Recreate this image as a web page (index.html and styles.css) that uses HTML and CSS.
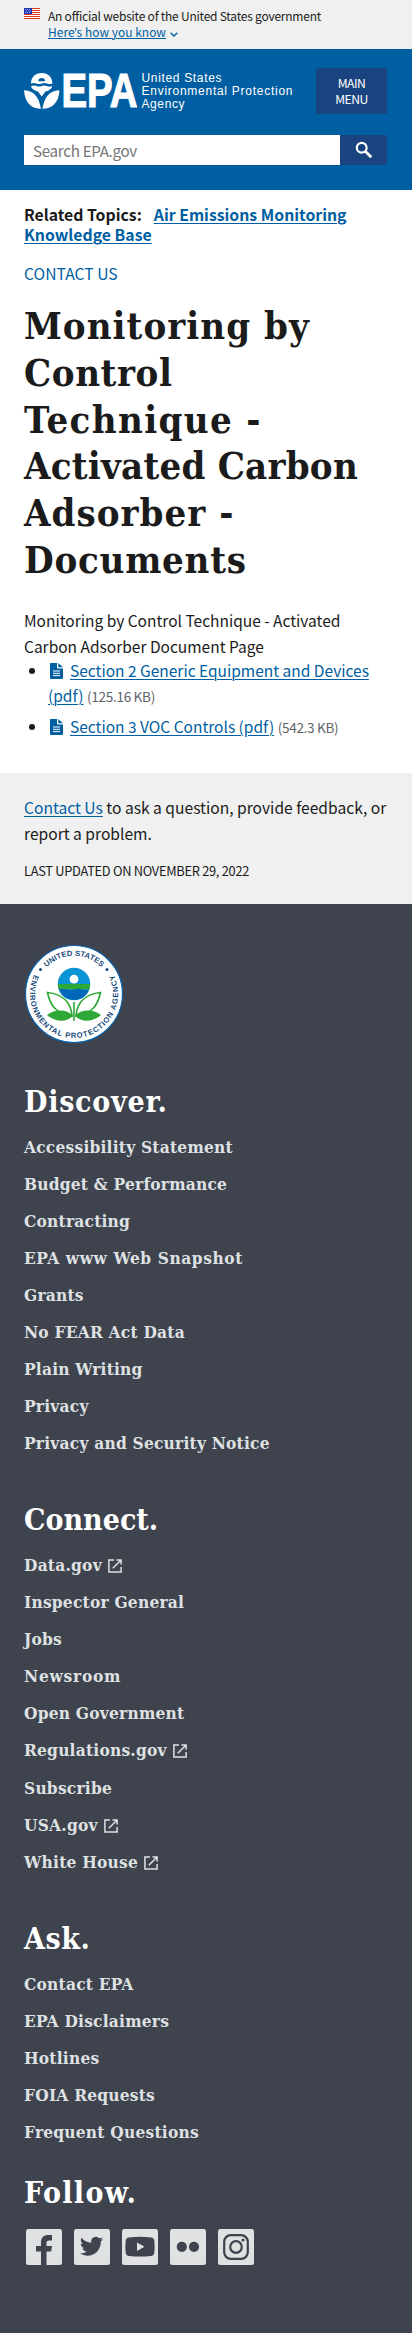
FILE: index.html
```html
<!DOCTYPE html>
<html lang="en">
<head>
<meta charset="utf-8">
<meta name="viewport" content="width=device-width, initial-scale=1">
<title>Monitoring by Control Technique - Activated Carbon Adsorber - Documents</title>
<link rel="stylesheet" href="styles.css">
</head>
<body>
<svg class="defs" width="0" height="0" aria-hidden="true">
  <symbol id="ext" viewBox="0 0 14 14"><path d="M6 .9H.9v12.200h12.200V8M8.500.9h4.600v4.600M12.800 1.200 4.800 9.200" fill="none" stroke="currentColor" stroke-width="1.500"/></symbol>
  <symbol id="doc" viewBox="0 0 13 16"><path d="M0 1Q0 0 1 0h6v4.500q0 1 1 1h5V15q0 1-1 1H1q-1 0-1-1z" fill="#005ea2"/><path d="M8.300 0 13 4.300H8.300z" fill="#005ea2"/><path d="M3 8h7M3 10.300h7M3 12.600h7" stroke="#fff" stroke-width="1"/></symbol>
</svg>

<div class="banner">
  <svg class="flag" viewBox="0 0 16 11"><path fill="#fff" d="M0 0h16v11H0z"/><path d="M0 .5h16M0 2.500h16M0 4.500h16M0 6.500h16M0 8.500h16M0 10.500h16" stroke="#db3e1f"/><path fill="#1e33b1" d="M0 0h8v6H0z"/><path d="M1 1.500h6M2 3h5M1 4.500h6" stroke="#fff" stroke-width=".7" stroke-dasharray=".8 1.200"/></svg>
  <div>
    <p class="banner-text tight">An official website of the United States government</p>
    <p class="banner-text"><a class="banner-link" href="#">Here<span class="apos">’</span>s how you know</a><svg class="chev" viewBox="0 0 8 5"><path d="m.7.8 3.300 3.200L7.300.8" fill="none" stroke="#005ea2" stroke-width="1.400"/></svg></p>
  </div>
</div>

<header class="header">
  <div class="brand-row">
    <svg class="logo" viewBox="0 0 270 40" role="img" aria-label="EPA">
      <g fill="#fff">
        <path d="M7 11.500C7 5 11.200.9 17.700.9S28.400 5 28.400 11.500q-2.500 1-5.200 0t-5.500 0-5.200 0-5.500 0z"/>
        <path d="M7 14.200q3-1.300 5.700-.2t5 0 5 0 5.700.2C27.500 17 24 19 21.500 19.500L17.700 24.500 14 19.500c-3-.7-6.300-2.700-7-5.300z"/>
        <path d="M0 18.200c8 .6 14.500 4 17 18.600C8 36.500 1 32 0 18.200zM35.500 18.200c-8 .6-14.500 4-17 18.600C27.500 36.500 34.500 32 35.500 18.200z"/>
      </g>
      <path d="M14.300 9.300a3.400 3.400 0 1 1 6.800 0z" fill="#005ea2"/>
      <text class="logo-epa" x="37.500" y="35.400" textLength="76" lengthAdjust="spacingAndGlyphs">EPA</text>
      <text class="logo-tag" x="117.500" y="10.300" textLength="80">United States</text>
      <text class="logo-tag" x="117.500" y="23" textLength="151">Environmental Protection</text>
      <text class="logo-tag" x="117.500" y="35.800" textLength="43">Agency</text>
    </svg>
    <button class="menu-btn">MAIN<br>MENU</button>
  </div>
  <form class="search">
    <div class="search-field">Search EPA.gov</div>
    <div class="search-btn"><svg viewBox="0 0 18 18"><circle cx="6.700" cy="6.700" r="4.900" fill="none" stroke="#fff" stroke-width="2.200"/><path d="m10.300 10.300 6 6" stroke="#fff" stroke-width="2.700"/></svg></div>
  </form>
</header>

<main class="main">
  <p class="related"><span class="related-label">Related Topics:</span><a href="#">Air Emissions Monitoring<br>Knowledge Base</a></p>
  <a class="contact" href="#">CONTACT US</a>
  <h1><span class="track-wide">Monitoring by</span><br><span class="track-mid">Control</span><br><span class="track-wider">Technique -</span><br><span class="track-slim">Activated Carbon</span><br><span class="track-wide">Adsorber -</span><br><span class="track-loose">Documents</span></h1>
  <p class="intro">Monitoring by Control Technique - Activated<br>Carbon Adsorber Document Page</p>
  <ul class="docs">
    <li><svg class="doc"><use href="#doc"/></svg><a href="#">Section 2 Generic Equipment and Devices<br>(pdf)</a> <span class="size">(125.16 KB)</span></li>
    <li><svg class="doc"><use href="#doc"/></svg><a href="#">Section 3 VOC Controls (pdf)</a> <span class="size">(542.3 KB)</span></li>
  </ul>
</main>

<section class="feedback">
  <p class="ask-line"><a href="#">Contact Us</a> to ask a question, provide feedback, or<br>report a problem.</p>
  <p class="updated">LAST UPDATED ON NOVEMBER 29, 2022</p>
</section>

<footer class="footer">
  <svg class="seal" viewBox="-50 -50 100 100" role="img" aria-label="EPA seal">
    <defs>
      <path id="arc-top" d="M-38.300 0A38.300 38.300 0 0 1 38.300 0"/>
      <path id="arc-bottom" d="M-39.600 -19.500A44.100 44.100 0 1 0 39.600 -19.500"/>
    </defs>
    <circle r="48.500" fill="#fff" stroke="#0b64b0" stroke-width="1.200"/>
    <text class="seal-text"><textPath href="#arc-top" startOffset="50%" text-anchor="middle" textLength="61" lengthAdjust="spacingAndGlyphs">UNITED STATES</textPath></text>
    <text class="seal-text"><textPath href="#arc-bottom" startOffset="50%" text-anchor="middle" textLength="178">ENVIRONMENTAL PROTECTION AGENCY</textPath></text>
    <circle cx="-33.500" cy="-24.500" r="1.500" fill="#174a7c"/><circle cx="33" cy="-24.500" r="1.500" fill="#174a7c"/>
    <circle cy="-10" r="16.200" fill="#0a94d6"/>
    <path d="M-16.200-10h32.400A16.200 16.200 0 0 1 15-4q-4-2-7.500 0T0-4t-7.500 0T-15-4a16.200 16.200 0 0 1-1.200-6z" fill="#2ea836"/>
    <path d="M-15.200-4.500Q-11-6-7.500-4.500T0-4.500t7.500 0 7.700 0A16.200 16.200 0 0 1-15.200-4.500z" fill="#0067b9"/>
    <circle cy="-14.800" r="4.400" fill="#fff"/>
    <path d="M0 8v19" stroke="#2ea836" stroke-width="1.600"/>
    <g fill="#fff" stroke="#2ea836" stroke-width="1.700"><path d="M-2 22C-3 9-11 0-26.500-1.500-24 10-19 20-2 22z"/><path d="M2 22C3 9 11 0 26.500-1.500 24 10 19 20 2 22z"/></g>
    <path d="M-1 22C-7 15-19 15-27 21c8 7 19 8 26 1zM1 22c6-7 18-7 26-1-8 7-19 8-26 1z" fill="#2ea836"/>
  </svg>

  <nav class="group discover">
    <h2 class="track-loose">Discover.</h2>
    <ul>
      <li><a href="#">Accessibility Statement</a></li>
      <li><a href="#">Budget &amp; Performance</a></li>
      <li><a href="#">Contracting</a></li>
      <li><a class="track-mid" href="#">EPA www Web Snapshot</a></li>
      <li><a href="#">Grants</a></li>
      <li><a href="#">No FEAR Act Data</a></li>
      <li><a href="#">Plain Writing</a></li>
      <li><a href="#">Privacy</a></li>
      <li><a href="#">Privacy and Security Notice</a></li>
    </ul>
  </nav>
  <nav class="group connect">
    <h2>Connect.</h2>
    <ul>
      <li class="external"><a href="#">Data.gov</a><svg class="ext"><use href="#ext"/></svg></li>
      <li><a href="#">Inspector General</a></li>
      <li><a href="#">Jobs</a></li>
      <li><a class="track-loose" href="#">Newsroom</a></li>
      <li><a href="#">Open Government</a></li>
      <li class="external"><a href="#">Regulations.gov</a><svg class="ext"><use href="#ext"/></svg></li>
      <li><a href="#">Subscribe</a></li>
      <li class="external"><a href="#">USA.gov</a><svg class="ext"><use href="#ext"/></svg></li>
      <li class="external"><a href="#">White House</a><svg class="ext"><use href="#ext"/></svg></li>
    </ul>
  </nav>
  <nav class="group ask">
    <h2 class="track-mid">Ask.</h2>
    <ul>
      <li><a href="#">Contact EPA</a></li>
      <li><a href="#">EPA Disclaimers</a></li>
      <li><a href="#">Hotlines</a></li>
      <li><a href="#">FOIA Requests</a></li>
      <li><a href="#">Frequent Questions</a></li>
    </ul>
  </nav>
  <section class="group follow">
    <h2 class="track-wider">Follow.</h2>
    <div class="social">
      <svg viewBox="0 0 36 36"><rect width="36" height="36" rx="2.500"/><path class="cut" d="M15 36V22.500H10V17h5v-3.500C15 8.500 17.500 6 22.300 6H26v5.500h-3c-2 0-2.500 1-2.500 2.500v3H26l-.8 5.500h-4.700V36z"/></svg>
      <svg viewBox="0 0 36 36"><rect width="36" height="36" rx="2.500"/><path class="cut" transform="translate(5.900 5.600) scale(.97)" d="M23.953 4.570a10 10 0 01-2.825.775 4.958 4.958 0 002.163-2.723c-.951.555-2.005.959-3.127 1.184a4.920 4.920 0 00-8.384 4.482C7.690 8.095 4.067 6.130 1.640 3.162a4.822 4.822 0 00-.666 2.475c0 1.710.87 3.213 2.188 4.096a4.904 4.904 0 01-2.228-.616v.06a4.923 4.923 0 003.946 4.827 4.996 4.996 0 01-2.212.085 4.936 4.936 0 004.604 3.417 9.867 9.867 0 01-6.102 2.105c-.39 0-.779-.023-1.170-.067a13.995 13.995 0 007.557 2.209c9.053 0 13.998-7.496 13.998-13.985 0-.21 0-.42-.015-.63A9.935 9.935 0 0024 4.590z"/></svg>
      <svg viewBox="0 0 36 36"><rect width="36" height="36" rx="2.500"/><path class="cut" d="M7 8.400q11-1.200 22 0 3 .3 3.300 3.300.7 6 0 12-.3 3-3.300 3.400-11 1-22 0-3-.4-3.300-3.400-.7-6 0-12Q4 8.700 7 8.400z"/><path d="m15 13.500 7.500 4.300-7.500 4.300z"/></svg>
      <svg viewBox="0 0 36 36"><rect width="36" height="36" rx="2.500"/><circle class="cut" cx="11.800" cy="17.800" r="5.100"/><circle class="cut" cx="24" cy="17.800" r="5.100"/></svg>
      <svg viewBox="0 0 36 36"><rect width="36" height="36" rx="2.500"/><rect class="line" x="6.200" y="6.200" width="23.600" height="23.600" rx="6.500"/><circle class="line" cx="18" cy="18" r="5.800"/><circle class="cut" cx="25" cy="11" r="1.600"/></svg>
    </div>
  </section>
</footer>
</body>
</html>
```
FILE: styles.css
```css
* { box-sizing: border-box; }
body {
  margin: 0;
  color: #1b1b1b;
  background: #fff;
  font-family: "Noto Sans CJK SC", "Noto Sans", sans-serif;
  font-size: 15.500px;
}
p, h1, h2, ul { margin: 0; padding: 0; }
a { color: #005ea2; text-underline-offset: 2px; text-decoration-thickness: 1px; }
.defs { position: absolute; }

.banner { display: flex; height: 49px; padding: 8px 24px 0; background: #f0f0f0; }
.flag { width: 16px; height: 11px; margin-right: 8px; }
.banner-text { height: 16px; font-size: 12px; line-height: 15px; white-space: nowrap; }
.tight { letter-spacing: -.23px; }
.banner-link { text-underline-offset: 1px; }
.apos { font-family: "Open Sans", sans-serif; }
.chev { width: 8px; height: 5px; margin-left: 4px; }

.header { height: 141px; padding: 19px 25px 0 24px; background: #005ea2; }
.brand-row { display: flex; justify-content: space-between; height: 67px; }
.logo { width: 270px; height: 40px; margin: 4px 0 0; flex: none; overflow: visible; }
.logo-epa { font: bold 47.500px "Liberation Sans", Arial, sans-serif; fill: #fff; stroke: #fff; stroke-width: 1.200; }
.logo-tag { font: 12px "Liberation Sans", Arial, sans-serif; fill: #fff; }
.menu-btn {
  flex: none; width: 71px; height: 46px; margin: 0 0 0 -10px; padding: 0; border: 0; border-radius: 2px;
  background: #1a4480; color: #fff; font: inherit; font-size: 12.200px; line-height: 16px; letter-spacing: -.5px;
}
.search { display: flex; height: 30px; }
.search-field {
  flex: 1; padding-left: 8px; border: 1px solid #fff;
  background: #fff; color: #757575; font-size: 15.200px; line-height: 29px; letter-spacing: -.32px;
}
.search-btn { display: flex; justify-content: center; width: 47px; padding-top: 6px; background: #1a4480; border-radius: 0 2px 2px 0; }
.search-btn svg { width: 18px; height: 18px; }

.main { height: 583px; padding: 15px 24px 0; }
.related { height: 59px; font-size: 15.800px; font-weight: 700; line-height: 20px; white-space: nowrap; }
.related-label { margin-right: 12px; }
.contact { display: block; height: 39px; font-size: 15.700px; line-height: 20px; text-decoration: none; }
h1, h2, .group a { font-family: "DejaVu Serif Condensed", "DejaVu Serif", serif; font-weight: 700; font-stretch: condensed; }
h1 { height: 304px; font-size: 38px; line-height: 46.800px; white-space: nowrap; }
.intro { height: 51px; line-height: 26px; white-space: nowrap; }
.docs { padding-left: 24px; line-height: 25px; white-space: nowrap; }
.docs li { margin-bottom: 5px; }
.doc { width: 13px; height: 16px; margin: 0 7px 0 2px; vertical-align: -2px; }
.size { color: #5f6368; font-size: 13.600px; letter-spacing: -.33px; }

.feedback { height: 131px; padding: 22px 24px 0; background: #f0f0f0; white-space: nowrap; }
.ask-line { height: 64px; font-size: 15.600px; line-height: 25.600px; }
.updated { font-size: 12.800px; line-height: 24px; letter-spacing: -.27px; }

.footer { height: 1429px; padding: 40px 24px 0; background: #3e434e; color: #fff; }
.seal { display: block; width: 100px; height: 100px; }
.seal-text { font: bold 7.600px "Liberation Sans", Arial, sans-serif; fill: #174a7c; }
.group h2 { height: 46px; font-size: 30px; line-height: 40px; }
.group ul { list-style: none; }
.group li { height: 37px; line-height: 37px; }
.group a { color: #dfe1e2; font-size: 17.200px; letter-spacing: .22px; text-decoration: none; }
.group .external { height: 37.300px; }
.ext { width: 14px; height: 14px; margin-left: 6px; color: #dfe1e2; vertical-align: -2px; }
.track-slim { letter-spacing: .22px; }
.track-mid, .group .track-mid { letter-spacing: .57px; }
.track-loose, .group .track-loose { letter-spacing: .75px; }
.track-wide { letter-spacing: 1.020px; }
.track-wider { letter-spacing: 1.360px; }
.discover { height: 418px; padding-top: 38px; }
.connect { height: 419px; padding-top: 38px; }
.ask { height: 254px; padding-top: 38px; }
.follow { padding-top: 38px; }
.social { display: flex; gap: 12px; padding: 10px 0 0 2px; }
.social svg { width: 36px; height: 36px; fill: #dfe1e2; }
.social .cut { fill: #3e434e; }
.social .line { fill: none; stroke: #3e434e; stroke-width: 2.200; }
```
